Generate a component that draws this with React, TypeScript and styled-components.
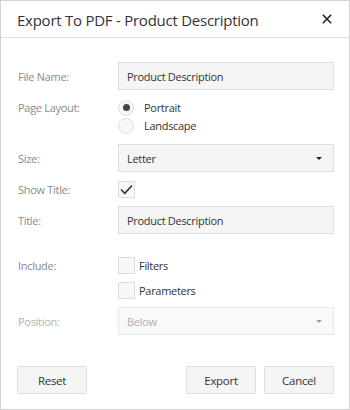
import styled, { createGlobalStyle } from "styled-components";

const GlobalStyle = createGlobalStyle`
  html, body {
    margin: 0;
    padding: 0;
    background: #fff;
  }
  * {
    box-sizing: border-box;
  }
`;

const App = () => {
  return (
    <>
      <GlobalStyle />
      <Dialog>
        <Header>
          <h2>Export To PDF - Product Description</h2>
          <CloseButton aria-label="close">
            <svg width="10" height="10" viewBox="0 0 10 10">
              <path d="M0.8 0.8 L9.2 9.2 M9.2 0.8 L0.8 9.2" stroke="#222" strokeWidth="1.6" />
            </svg>
          </CloseButton>
        </Header>
        <Body>
          <Row $top={24}>
            <Label>File Name:</Label>
            <TextBox>Product Description</TextBox>
          </Row>
          <Row $top={9} $align="start">
            <Label $pad={1}>Page Layout:</Label>
            <RadioGroup>
              <Option $gap={10}>
                <Radio $checked />
                Portrait
              </Option>
              <Option $gap={10}>
                <Radio />
                Landscape
              </Option>
            </RadioGroup>
          </Row>
          <Row $top={10}>
            <Label>Size:</Label>
            <Select>
              Letter
              <Caret />
            </Select>
          </Row>
          <Row $top={9}>
            <Label>Show Title:</Label>
            <CheckBox>
              <svg width="13" height="11" viewBox="0 0 13 11">
                <path d="M1 5.5 L4.8 9.3 L12 1.5" fill="none" stroke="#333" strokeWidth="1.7" />
              </svg>
            </CheckBox>
          </Row>
          <Row $top={8}>
            <Label>Title:</Label>
            <TextBox>Product Description</TextBox>
          </Row>
          <Row $top={23} $align="start">
            <Label $pad={1}>Include:</Label>
            <CheckGroup>
              <Option $gap={4}>
                <CheckBox />
                Filters
              </Option>
              <Option $gap={4}>
                <CheckBox />
                Parameters
              </Option>
            </CheckGroup>
          </Row>
          <Row $top={8}>
            <Label $disabled>Position:</Label>
            <Select $disabled>
              Below
              <Caret $disabled />
            </Select>
          </Row>
        </Body>
        <Footer>
          <Button>Reset</Button>
          <Spacer />
          <Button>Export</Button>
          <Button>Cancel</Button>
        </Footer>
      </Dialog>
    </>
  );
};

const Dialog = styled.div`
  width: 350px;
  height: 410px;
  border: 1px solid #d2d2d2;
  background: #fff;
  display: flex;
  flex-direction: column;
  font-family: "Segoe UI", "Open Sans", "Noto Sans", sans-serif;
  color: #333;
`;

const Header = styled.div`
  height: 37px;
  border-bottom: 1px solid #e0e0e0;
  display: flex;
  align-items: center;
  padding: 0 16px 0 16px;
  h2 {
    flex: 1;
    margin: 0;
    font-size: 15px;
    font-weight: 400;
    color: #333;
    letter-spacing: -0.25px;
    padding-top: 1px;
  }
`;

const CloseButton = styled.button`
  border: none;
  background: none;
  padding: 0;
  width: 12px;
  height: 12px;
  display: flex;
  align-items: center;
  justify-content: center;
  margin-right: 0;
`;

const Body = styled.div`
  padding: 0 15px 0 16px;
  display: flex;
  flex-direction: column;
  font-size: 11px;
  letter-spacing: -0.3px;
  line-height: 15px;
`;

const Row = styled.div<{ $top: number; $align?: string }>`
  display: grid;
  grid-template-columns: 101px 1fr;
  align-items: ${(p) => p.$align || "center"};
  margin-top: ${(p) => p.$top}px;
`;

const Label = styled.div<{ $disabled?: boolean; $pad?: number }>`
  color: ${(p) => (p.$disabled ? "#b0b0b0" : "#8a8a8a")};
  padding-top: ${(p) => p.$pad || 0}px;
  padding-left: 1px;
`;

const TextBox = styled.div`
  height: 28px;
  border: 1px solid #dedede;
  background: #f5f5f5;
  color: #333;
  display: flex;
  align-items: center;
  padding-left: 8px;
`;

const Select = styled(TextBox)<{ $disabled?: boolean }>`
  justify-content: space-between;
  padding-right: 11px;
  color: ${(p) => (p.$disabled ? "#b0b0b0" : "#333")};
  background: ${(p) => (p.$disabled ? "#f9f9f9" : "#f5f5f5")};
  border-color: ${(p) => (p.$disabled ? "#e8e8e8" : "#dedede")};
`;

const Caret = styled.span<{ $disabled?: boolean }>`
  width: 0;
  height: 0;
  border-left: 3px solid transparent;
  border-right: 3px solid transparent;
  border-top: 3px solid ${(p) => (p.$disabled ? "#a0a0a0" : "#222")};
`;

const RadioGroup = styled.div`
  display: flex;
  flex-direction: column;
  gap: 1px;
`;

const CheckGroup = styled.div`
  display: flex;
  flex-direction: column;
  gap: 8px;
`;

const Option = styled.div<{ $gap: number }>`
  display: flex;
  align-items: center;
  gap: ${(p) => p.$gap}px;
  color: #333;
  min-height: 17px;
`;

const Radio = styled.span<{ $checked?: boolean }>`
  width: 16px;
  height: 16px;
  border-radius: 50%;
  border: 1px solid #e0e0e0;
  background: #f7f7f7;
  display: flex;
  align-items: center;
  justify-content: center;
  &::after {
    content: "";
    display: ${(p) => (p.$checked ? "block" : "none")};
    width: 7px;
    height: 7px;
    border-radius: 50%;
    background: #444;
  }
`;

const CheckBox = styled.span`
  width: 17px;
  height: 17px;
  border: 1px solid #dcdcdc;
  background: #f8f8f8;
  display: flex;
  align-items: center;
  justify-content: center;
`;

const Footer = styled.div`
  display: flex;
  gap: 8px;
  padding: 0 15px 0 16px;
  margin-top: 31px;
`;

const Spacer = styled.div`
  flex: 1;
`;

const Button = styled.button`
  width: 70px;
  height: 28px;
  border: 1px solid #dedede;
  border-radius: 2px;
  background: #f5f5f5;
  font-family: inherit;
  font-size: 11.5px;
  letter-spacing: -0.3px;
  color: #333;
  padding: 0;
`;

export default App;
